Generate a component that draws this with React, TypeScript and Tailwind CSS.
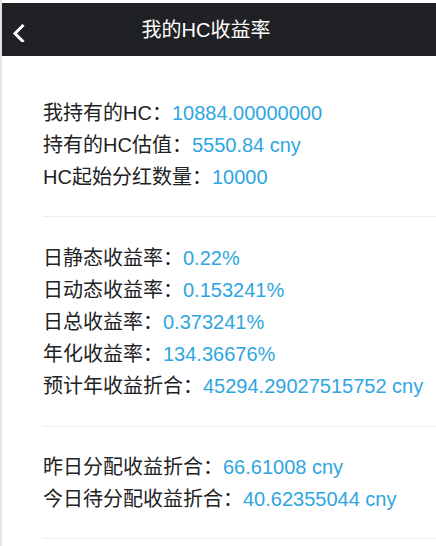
const sections = [
  [
    { label: "我持有的HC：", value: "10884.00000000" },
    { label: "持有的HC估值：", value: "5550.84 cny" },
    { label: "HC起始分红数量：", value: "10000" },
  ],
  [
    { label: "日静态收益率：", value: "0.22%" },
    { label: "日动态收益率：", value: "0.153241%" },
    { label: "日总收益率：", value: "0.373241%" },
    { label: "年化收益率：", value: "134.36676%" },
    { label: "预计年收益折合：", value: "45294.29027515752 cny" },
  ],
  [
    { label: "昨日分配收益折合：", value: "66.61008 cny" },
    { label: "今日待分配收益折合：", value: "40.62355044 cny" },
  ],
];

const sectionPad = ["pt-[41px] pb-[23px]", "pt-[25px] pb-6", "pt-6 pb-[23px]"];

export default function App() {
  return (
    <div
      className="min-h-[546px] w-[436px] border-l-2 border-[#e4e4e4] bg-white pt-[3px]"
      style={{ fontFamily: '"Liberation Sans", "Noto Sans CJK SC", sans-serif' }}
    >
      <header className="flex h-[53px] items-center bg-[#1f2124] text-white">
        <div className="flex w-[40px] justify-start pl-[9px] pt-[6px]">
          <svg width="14" height="18" viewBox="0 0 14 18" fill="none">
            <path
              d="M11.5 2 L4 9.5 L11.5 17"
              stroke="white"
              strokeWidth="3"
              strokeLinecap="square"
              strokeLinejoin="miter"
            />
          </svg>
        </div>
        <h1 className="flex-1 text-center text-[20px] leading-none">我的HC收益率</h1>
        <div className="w-[66px]" />
      </header>
      <main>
        {sections.map((rows, i) => (
          <section
            key={i}
            className={`ml-[41px] border-b border-[#eeeeee] ${sectionPad[i]}`}
          >
            {rows.map((r) => (
              <div key={r.label} className="whitespace-nowrap text-[20px] leading-[32px] text-[#222]">
                {r.label}
                <span className="text-[#2ea6df]">{r.value}</span>
              </div>
            ))}
          </section>
        ))}
      </main>
    </div>
  );
}
